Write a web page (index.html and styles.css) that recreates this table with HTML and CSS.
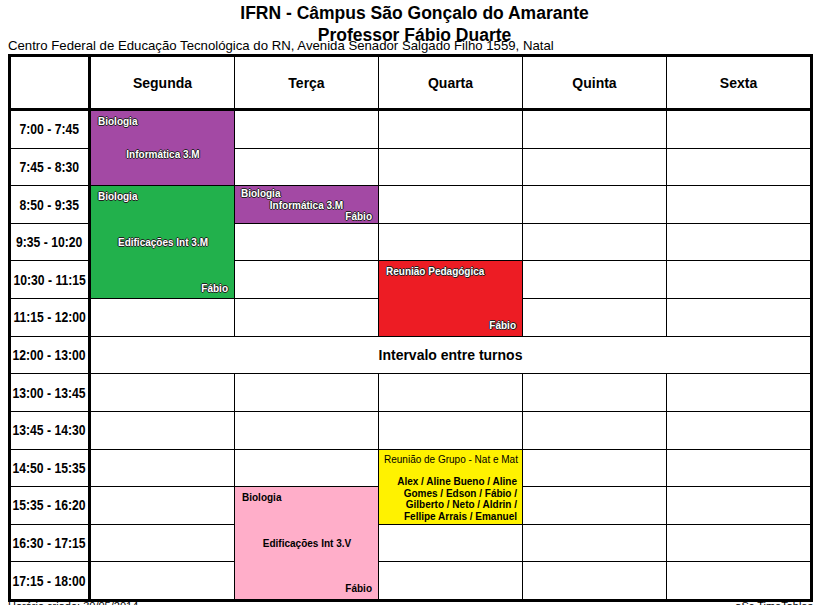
FILE: index.html
```html
<!DOCTYPE html>
<html lang="pt-BR">
<head>
<meta charset="utf-8">
<title>Horário - Professor Fábio Duarte</title>
<link rel="stylesheet" href="styles.css">
</head>
<body>
<div class="page">
  <header class="head">
    <h1 class="title">IFRN - Câmpus São Gonçalo do Amarante</h1>
    <h2 class="teacher">Professor Fábio Duarte</h2>
    <p class="address">Centro Federal de Educação Tecnológica do RN, Avenida Senador Salgado Filho 1559, Natal</p>
  </header>

  <div class="timetable">
    <div class="corner"></div>
    <div class="day">Segunda</div>
    <div class="day">Terça</div>
    <div class="day">Quarta</div>
    <div class="day">Quinta</div>
    <div class="day">Sexta</div>

    <!-- 7:00 -->
    <div class="time"><span class="time-label">7:00 - 7:45</span></div>
    <div class="lesson purple rows-2">
      <span class="subject">Biologia</span>
      <span class="group">Informática 3.M</span>
      <span class="teacher-name"></span>
    </div>
    <div class="cell"></div><div class="cell"></div><div class="cell"></div><div class="cell"></div>

    <!-- 7:45 -->
    <div class="time"><span class="time-label">7:45 - 8:30</span></div>
    <div class="cell"></div><div class="cell"></div><div class="cell"></div><div class="cell"></div>

    <!-- 8:50 -->
    <div class="time"><span class="time-label">8:50 - 9:35</span></div>
    <div class="lesson green rows-3">
      <span class="subject">Biologia</span>
      <span class="group">Edificações Int 3.M</span>
      <span class="teacher-name">Fábio</span>
    </div>
    <div class="lesson purple compact">
      <span class="subject">Biologia</span>
      <span class="group">Informática 3.M</span>
      <span class="teacher-name">Fábio</span>
    </div>
    <div class="cell"></div><div class="cell"></div><div class="cell"></div>

    <!-- 9:35 -->
    <div class="time"><span class="time-label">9:35 - 10:20</span></div>
    <div class="cell"></div><div class="cell"></div><div class="cell"></div><div class="cell"></div>

    <!-- 10:30 -->
    <div class="time"><span class="time-label">10:30 - 11:15</span></div>
    <div class="cell"></div>
    <div class="lesson red rows-2">
      <span class="subject">Reunião Pedagógica</span>
      <span class="group"></span>
      <span class="teacher-name">Fábio</span>
    </div>
    <div class="cell"></div><div class="cell"></div>

    <!-- 11:15 -->
    <div class="time"><span class="time-label">11:15 - 12:00</span></div>
    <div class="cell"></div><div class="cell"></div><div class="cell"></div><div class="cell"></div>

    <!-- 12:00 -->
    <div class="time"><span class="time-label">12:00 - 13:00</span></div>
    <div class="break">Intervalo entre turnos</div>

    <!-- 13:00 -->
    <div class="time"><span class="time-label">13:00 - 13:45</span></div>
    <div class="cell"></div><div class="cell"></div><div class="cell"></div><div class="cell"></div><div class="cell"></div>

    <!-- 13:45 -->
    <div class="time"><span class="time-label">13:45 - 14:30</span></div>
    <div class="cell"></div><div class="cell"></div><div class="cell"></div><div class="cell"></div><div class="cell"></div>

    <!-- 14:50 -->
    <div class="time"><span class="time-label">14:50 - 15:35</span></div>
    <div class="cell"></div><div class="cell"></div>
    <div class="meeting yellow rows-2">
      <p class="meeting-title">Reunião de Grupo - Nat e Mat</p>
      <p class="meeting-names">Alex / Aline Bueno / Aline<br>Gomes / Edson / Fábio /<br>Gilberto / Neto / Aldrin /<br>Fellipe Arrais / Emanuel</p>
    </div>
    <div class="cell"></div><div class="cell"></div>

    <!-- 15:35 -->
    <div class="time"><span class="time-label">15:35 - 16:20</span></div>
    <div class="cell"></div>
    <div class="lesson pink rows-3">
      <span class="subject">Biologia</span>
      <span class="group">Edificações Int 3.V</span>
      <span class="teacher-name">Fábio</span>
    </div>
    <div class="cell"></div><div class="cell"></div>

    <!-- 16:30 -->
    <div class="time"><span class="time-label">16:30 - 17:15</span></div>
    <div class="cell"></div><div class="cell"></div><div class="cell"></div><div class="cell"></div>

    <!-- 17:15 -->
    <div class="time"><span class="time-label">17:15 - 18:00</span></div>
    <div class="cell"></div><div class="cell"></div><div class="cell"></div><div class="cell"></div>
  </div>

  <footer class="foot">
    <span>Horário criado: 30/05/2014</span>
    <span>aSc TimeTables</span>
  </footer>
</div>
</body>
</html>
```

FILE: styles.css
```css
* {
  box-sizing: border-box;
}

html, body {
  margin: 0;
  padding: 0;
  background: #fff;
}

body {
  font-family: "Liberation Sans", Arial, sans-serif;
  color: #000;
  overflow: hidden;
}

.page {
  width: 819px;
  height: 605px;
  padding: 2px 0 0 8px;
  overflow: hidden;
}

.head {
  width: 805px;
  text-align: center;
}

.title {
  margin: 0;
  padding-left: 8px;
  font-size: 17.5px;
  line-height: 22px;
  font-weight: bold;
}

.teacher {
  margin: 0;
  padding-left: 8px;
  font-size: 17.5px;
  line-height: 22px;
  font-weight: bold;
}

.address {
  margin: -7px 0 0 0;
  text-align: left;
  font-size: 13.2px;
  line-height: 14px;
  height: 14px;
  white-space: nowrap;
}

.timetable {
  margin-top: 1px;
  width: 805px;
  height: 548px;
  padding: 3px;
  background: #000;
  display: grid;
  grid-template-columns: 79px repeat(5, 143px);
  grid-template-rows: 53px repeat(13, 1fr);
  gap: 1px;
}

.corner,
.day,
.time,
.cell,
.break {
  background: #fff;
}

.corner {
  margin: 0 2px 2px 0;
}

.day {
  margin-bottom: 2px;
  display: flex;
  align-items: center;
  justify-content: center;
  font-size: 14px;
  font-weight: bold;
}

.time {
  margin-right: 2px;
  display: flex;
  align-items: center;
  justify-content: center;
  overflow: visible;
}

.time-label {
  display: inline-block;
  font-size: 14px;
  font-weight: bold;
  white-space: nowrap;
  transform: scaleX(0.87);
}

.break {
  grid-column: span 5;
  display: flex;
  align-items: center;
  justify-content: center;
  font-size: 14px;
  font-weight: bold;
}

.rows-2 { grid-row: span 2; }
.rows-3 { grid-row: span 3; }

.lesson {
  display: grid;
  grid-template-rows: auto 1fr auto;
  padding: 5px 6px 4px 7px;
  font-size: 10px;
  line-height: 11.5px;
  font-weight: bold;
  white-space: nowrap;
}

.lesson.compact {
  padding: 2px 6px 1px 6px;
  line-height: 11px;
}

.subject {
  text-align: left;
}

.group {
  align-self: center;
  text-align: center;
}

.teacher-name {
  text-align: right;
}

.purple { background: #a349a4; }
.green  { background: #22b14c; }
.red    { background: #ed1c24; }
.yellow { background: #fff200; }
.pink   { background: #ffaec9; }

.purple,
.green,
.red {
  color: #fff;
  text-shadow:
    1px 0 0 #222,
    -1px 0 0 #222,
    0 1px 0 #222,
    0 -1px 0 #222;
}

.pink {
  color: #000;
}

.meeting {
  padding: 4px 5px 0 5px;
  text-align: right;
  font-size: 10px;
  line-height: 11.4px;
  white-space: nowrap;
}

.meeting-title {
  margin: 0 0 11.4px 0;
  font-weight: normal;
}

.meeting-names {
  margin: 0;
  font-weight: bold;
}

.foot {
  display: flex;
  justify-content: space-between;
  width: 805px;
  font-size: 11px;
  line-height: 9px;
}
```
